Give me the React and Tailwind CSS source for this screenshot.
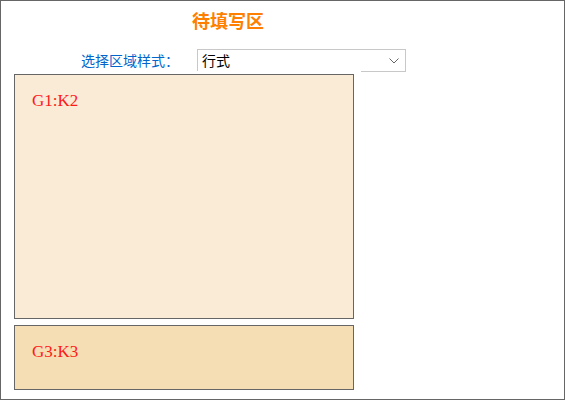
export default function App() {
  return (
    <div className="w-[565px] h-[400px] border border-[#666] bg-white font-['Noto_Sans_CJK_SC',sans-serif] overflow-hidden">
      {/* title */}
      <div className="h-[37px] flex items-center pl-[191px]">
        <span className="text-[18px] leading-[18px] font-bold text-[#ff8000]">待填写区</span>
      </div>

      {/* style picker */}
      <div className="mt-[11px] h-[23px] flex items-center">
        <div className="w-[196px] pl-[80px] pb-[2px] text-[14px] leading-[14px] text-[#0066cc]">选择区域样式：</div>
        <div className="w-[209px] h-[23px] border border-[#c8c8c8] flex items-center justify-between pl-[4px] pr-[6px]">
          <span className="pb-[2px] text-[14px] leading-[14px] text-black">行式</span>
          <svg width="10" height="6" viewBox="0 0 10 6" fill="none">
            <path d="M0.5 0.5 L5 5 L9.5 0.5" stroke="#666" strokeWidth="1" />
          </svg>
        </div>
      </div>

      {/* fill areas */}
      <div className="relative bg-white w-[360px] -mt-[1px] pt-[3px]">
        <div className="ml-[13px] w-[340px] h-[245px] border border-[#666] bg-[#faebd7] pl-[17px] pt-[12px]">
          <span className="font-['Liberation_Serif',serif] text-[17px] leading-[17px] text-[#ff1a1a]">G1:K2</span>
        </div>
        <div className="ml-[13px] mt-[6px] w-[340px] h-[65px] border border-[#666] bg-[#f5deb3] pl-[17px] pt-[12px]">
          <span className="font-['Liberation_Serif',serif] text-[17px] leading-[17px] text-[#ff1a1a]">G3:K3</span>
        </div>
      </div>
    </div>
  )
}
